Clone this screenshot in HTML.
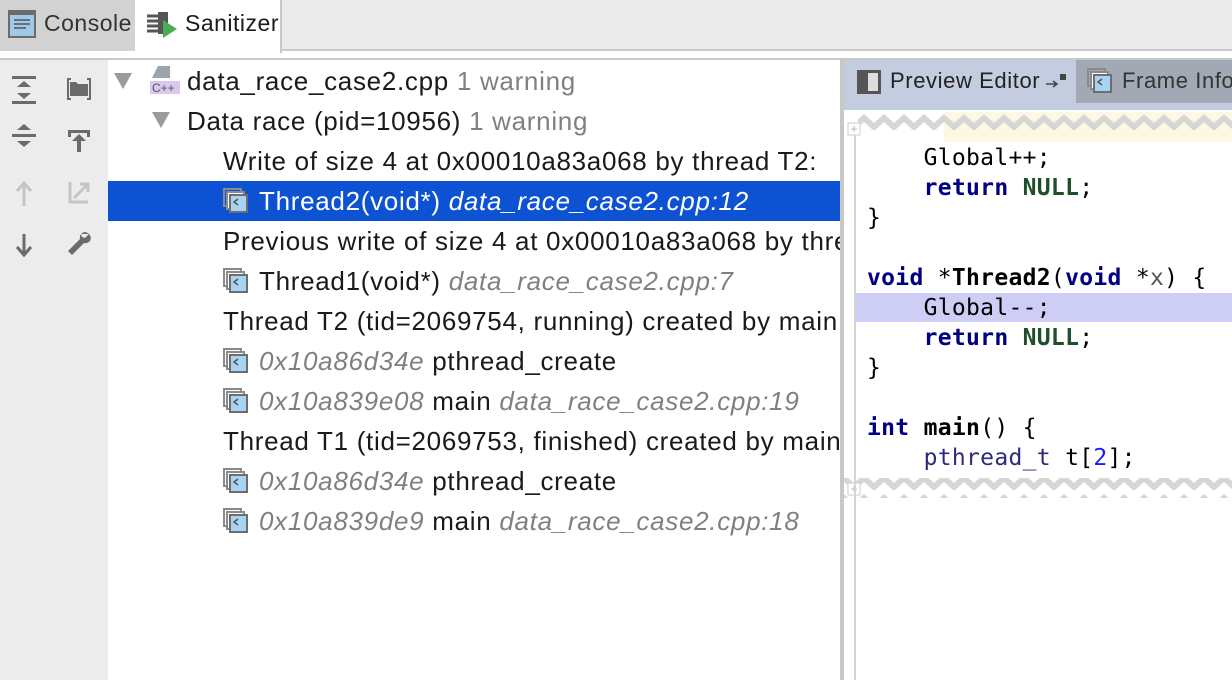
<!DOCTYPE html>
<html><head><meta charset="utf-8"><style>
*{margin:0;padding:0;box-sizing:border-box}
body{width:1232px;height:680px;overflow:hidden;background:#fff;font-family:"Liberation Sans",sans-serif;position:relative}
.a{position:absolute}
.row{position:absolute;left:108px;width:732px;height:40px;font-size:26px;letter-spacing:0.7px;line-height:40px;color:#1a1a1a;white-space:nowrap;overflow:hidden}
.g{color:#808080}
.i{font-style:italic;color:#808080}
.code{position:absolute;left:867px;font-family:"DejaVu Sans Mono",monospace;font-size:23px;letter-spacing:0.3px;line-height:30px;white-space:pre;color:#000}
.kw{color:#000080;font-weight:bold}
.nl{color:#1f4f2a;font-weight:bold}
</style></head><body>
<div class="a" style="left:0;top:0;width:1232px;height:51px;background:#ebebeb;border-bottom:2px solid #c8c8c8"></div>
<div class="a" style="left:0;top:0;width:135px;height:51px;background:#d2d2d2"></div>
<div class="a" style="left:135px;top:0;width:147px;height:53px;background:#fff;border-right:2px solid #c8c8c8"></div>
<svg class="a" style="left:8px;top:10px" width="28" height="28"><rect x="0" y="0" width="28" height="28" fill="#6b6b6b"/><rect x="2" y="5" width="24" height="21" fill="#9fc9e8"/><path d="M6 10h16M6 14h16M6 18h12" stroke="#555" stroke-width="1.5"/></svg>
<div class="a" style="left:44px;top:10px;font-size:23px;letter-spacing:0.5px;color:#333">Console</div>
<svg class="a" style="left:147px;top:12px" width="32" height="28"><path d="M0 4h12M0 9h12M0 14h12M0 19h12" stroke="#555" stroke-width="3"/><rect x="11" y="0" width="10" height="22" fill="#555"/><path d="M16 8l14 9-14 9z" fill="#4caa58"/></svg>
<div class="a" style="left:185px;top:10px;font-size:23px;letter-spacing:0.5px;color:#1a1a1a">Sanitizer</div>
<div class="a" style="left:0;top:58px;width:1232px;height:2px;background:#c9c9c9"></div>
<div class="a" style="left:0;top:60px;width:108px;height:620px;background:#ececec"></div>
<svg class="a" style="left:10px;top:74px" width="90" height="190">
<g fill="#6b6b6b"><rect x="2" y="2" width="24" height="3"/><rect x="2" y="27" width="24" height="3"/><path d="M7 13l7-6 7 6zM7 19l7 6 7-6z"/>
<rect x="2" y="60" width="24" height="3"/><path d="M7 56l7-6 7 6zM7 67l7 6 7-6z" transform="rotate(180 14 61.5) "/>
<path d="M57 4h4v2h-2v18h2v2h-4zM81 4h-4v2h2v18h-2v2h4zM60 8h6l2 2h10v12H60z"/>
<rect x="58" y="56" width="22" height="3"/><rect x="58" y="56" width="3" height="7"/><rect x="77" y="56" width="3" height="7"/><path d="M62 67l7-7 7 7z"/><rect x="67" y="66" width="4" height="12"/>
<path d="M14 160v20M7 173l7 8 7-8" stroke="#6b6b6b" stroke-width="3" fill="none"/>
<path d="M79 160c-4-4-10-1-9 5l-12 12 4 4 12-12c6 1 9-5 5-9l-4 4-3-1-1-3z"/></g>
<g stroke="#c4c4c4" stroke-width="3" fill="none"><path d="M14 132v-22M7 117l7-8 7 8"/><path d="M60 108v20h18M64 124l14-14M70 110h8v8"/></g>
</svg>
<svg class="a" style="left:113px;top:72px" width="100" height="70"><path d="M1 1h18l-9 16z" fill="#9a9a9a"/><path d="M39 40h18l-9 16z" fill="#9a9a9a"/></svg>
<svg class="a" style="left:150px;top:65px" width="32" height="30"><path d="M8 1h12v12H2z" fill="#9aa4ad"/><rect x="0" y="16" width="30" height="13" fill="#d8c8f0"/><text x="2" y="27" font-size="12" font-family="Liberation Sans" fill="#555">C++</text></svg>
<div class="row" style="top:61px;padding-left:79px">data_race_case2.cpp <span class="g">1 warning</span></div>
<div class="row" style="top:101px;padding-left:79px">Data race (pid=10956) <span class="g">1 warning</span></div>
<div class="row" style="top:141px;padding-left:115px">Write of size 4 at 0x00010a83a068 by thread T2:</div>
<div class="row" style="top:181px;padding-left:151px;background:#0d52d2;color:#fff">Thread2(void*) <i style="color:#fff">data_race_case2.cpp:12</i></div>
<div class="row" style="top:221px;padding-left:115px">Previous write of size 4 at 0x00010a83a068 by thread T1:</div>
<div class="row" style="top:261px;padding-left:151px">Thread1(void*) <span class="i">data_race_case2.cpp:7</span></div>
<div class="row" style="top:301px;padding-left:115px">Thread T2 (tid=2069754, running) created by main thread</div>
<div class="row" style="top:341px;padding-left:151px"><span class="i">0x10a86d34e</span> pthread_create</div>
<div class="row" style="top:381px;padding-left:151px"><span class="i">0x10a839e08</span> main <span class="i">data_race_case2.cpp:19</span></div>
<div class="row" style="top:421px;padding-left:115px">Thread T1 (tid=2069753, finished) created by main thread</div>
<div class="row" style="top:461px;padding-left:151px"><span class="i">0x10a86d34e</span> pthread_create</div>
<div class="row" style="top:501px;padding-left:151px"><span class="i">0x10a839de9</span> main <span class="i">data_race_case2.cpp:18</span></div>
<svg width="0" height="0" style="position:absolute"><defs><g id="fr"><rect x="1" y="1" width="17" height="17" fill="none" stroke="#8a8a8a" stroke-width="2"/><rect x="4" y="4" width="17" height="17" fill="#fff" stroke="#8a8a8a" stroke-width="2"/><rect x="7" y="7" width="17" height="17" fill="#a8d4f4" stroke="#6e6e6e" stroke-width="2"/><path d="M15 11l-4 3 4 3" stroke="#555" stroke-width="1.5" fill="none"/></g></defs></svg>
<svg class="a" style="left:223px;top:188px" width="26" height="26"><use href="#fr"/></svg>
<svg class="a" style="left:223px;top:268px" width="26" height="26"><use href="#fr"/></svg>
<svg class="a" style="left:223px;top:348px" width="26" height="26"><use href="#fr"/></svg>
<svg class="a" style="left:223px;top:388px" width="26" height="26"><use href="#fr"/></svg>
<svg class="a" style="left:223px;top:468px" width="26" height="26"><use href="#fr"/></svg>
<svg class="a" style="left:223px;top:508px" width="26" height="26"><use href="#fr"/></svg>
<div class="a" style="left:840px;top:60px;width:4px;height:620px;background:#c8c8c8"></div>
<div class="a" style="left:844px;top:60px;width:388px;height:50px;background:#c4cde0"></div>
<div class="a" style="left:1076px;top:60px;width:156px;height:43px;background:#a2a8b4"></div>
<svg class="a" style="left:857px;top:70px" width="24" height="24"><rect x="0" y="0" width="24" height="24" fill="#555"/><rect x="11" y="3" width="10" height="18" fill="#ddd"/></svg>
<div class="a" style="left:890px;top:68px;font-size:22px;letter-spacing:0.6px;color:#222">Preview Editor</div>
<svg class="a" style="left:1045px;top:72px" width="26" height="20"><path d="M1 12h10M8 9l4 3-4 3" stroke="#444" stroke-width="1.5" fill="none"/><rect x="15" y="2" width="6" height="6" fill="#444"/></svg>
<svg class="a" style="left:1087px;top:68px" width="28" height="28"><use href="#fr"/></svg>
<div class="a" style="left:1122px;top:68px;font-size:22px;letter-spacing:0.6px;color:#333;white-space:nowrap">Frame Info</div>
<div class="a" style="left:844px;top:110px;width:388px;height:570px;background:#fff"></div>
<div class="a" style="left:944px;top:112px;width:288px;height:30px;background:#fdf8e4"></div>
<svg class="a" style="left:844px;top:110px" width="388" height="390">
<defs><pattern id="zz" width="20" height="20" patternUnits="userSpaceOnUse"><path d="M0 4l10 9 10-9v8l-10 9-10-9z" fill="#d6d6d6"/></pattern></defs>
<rect x="14" y="2" width="374" height="20" fill="url(#zz)"/>
<rect x="0" y="368" width="388" height="20" fill="url(#zz)"/>
<rect x="4" y="13" width="12" height="12" fill="#fff" stroke="#ccc"/><path d="M10 16v6M7 19h6" stroke="#bbb"/>
<rect x="4" y="373" width="12" height="12" fill="#fff" stroke="#ccc"/><path d="M10 376v6M7 379h6" stroke="#bbb"/>
</svg>
<div class="a" style="left:854px;top:135px;width:2px;height:545px;background:#d4d4d4"></div>
<div class="a" style="left:856px;top:293px;width:376px;height:29px;background:#cdcdf6"></div>
<div class="code" style="top:143px">    Global++;
    <span class="kw">return</span> <span class="nl">NULL</span>;
}

<span class="kw">void</span> *<b>Thread2</b>(<span class="kw">void</span> *<span style="color:#555">x</span>) {
    Global--;
    <span class="kw">return</span> <span class="nl">NULL</span>;
}

<span class="kw">int</span> <b>main</b>() {
    <span style="color:#2f2a7a">pthread_t</span> t[<span style="color:#1a1aff">2</span>];</div>
</body></html>
